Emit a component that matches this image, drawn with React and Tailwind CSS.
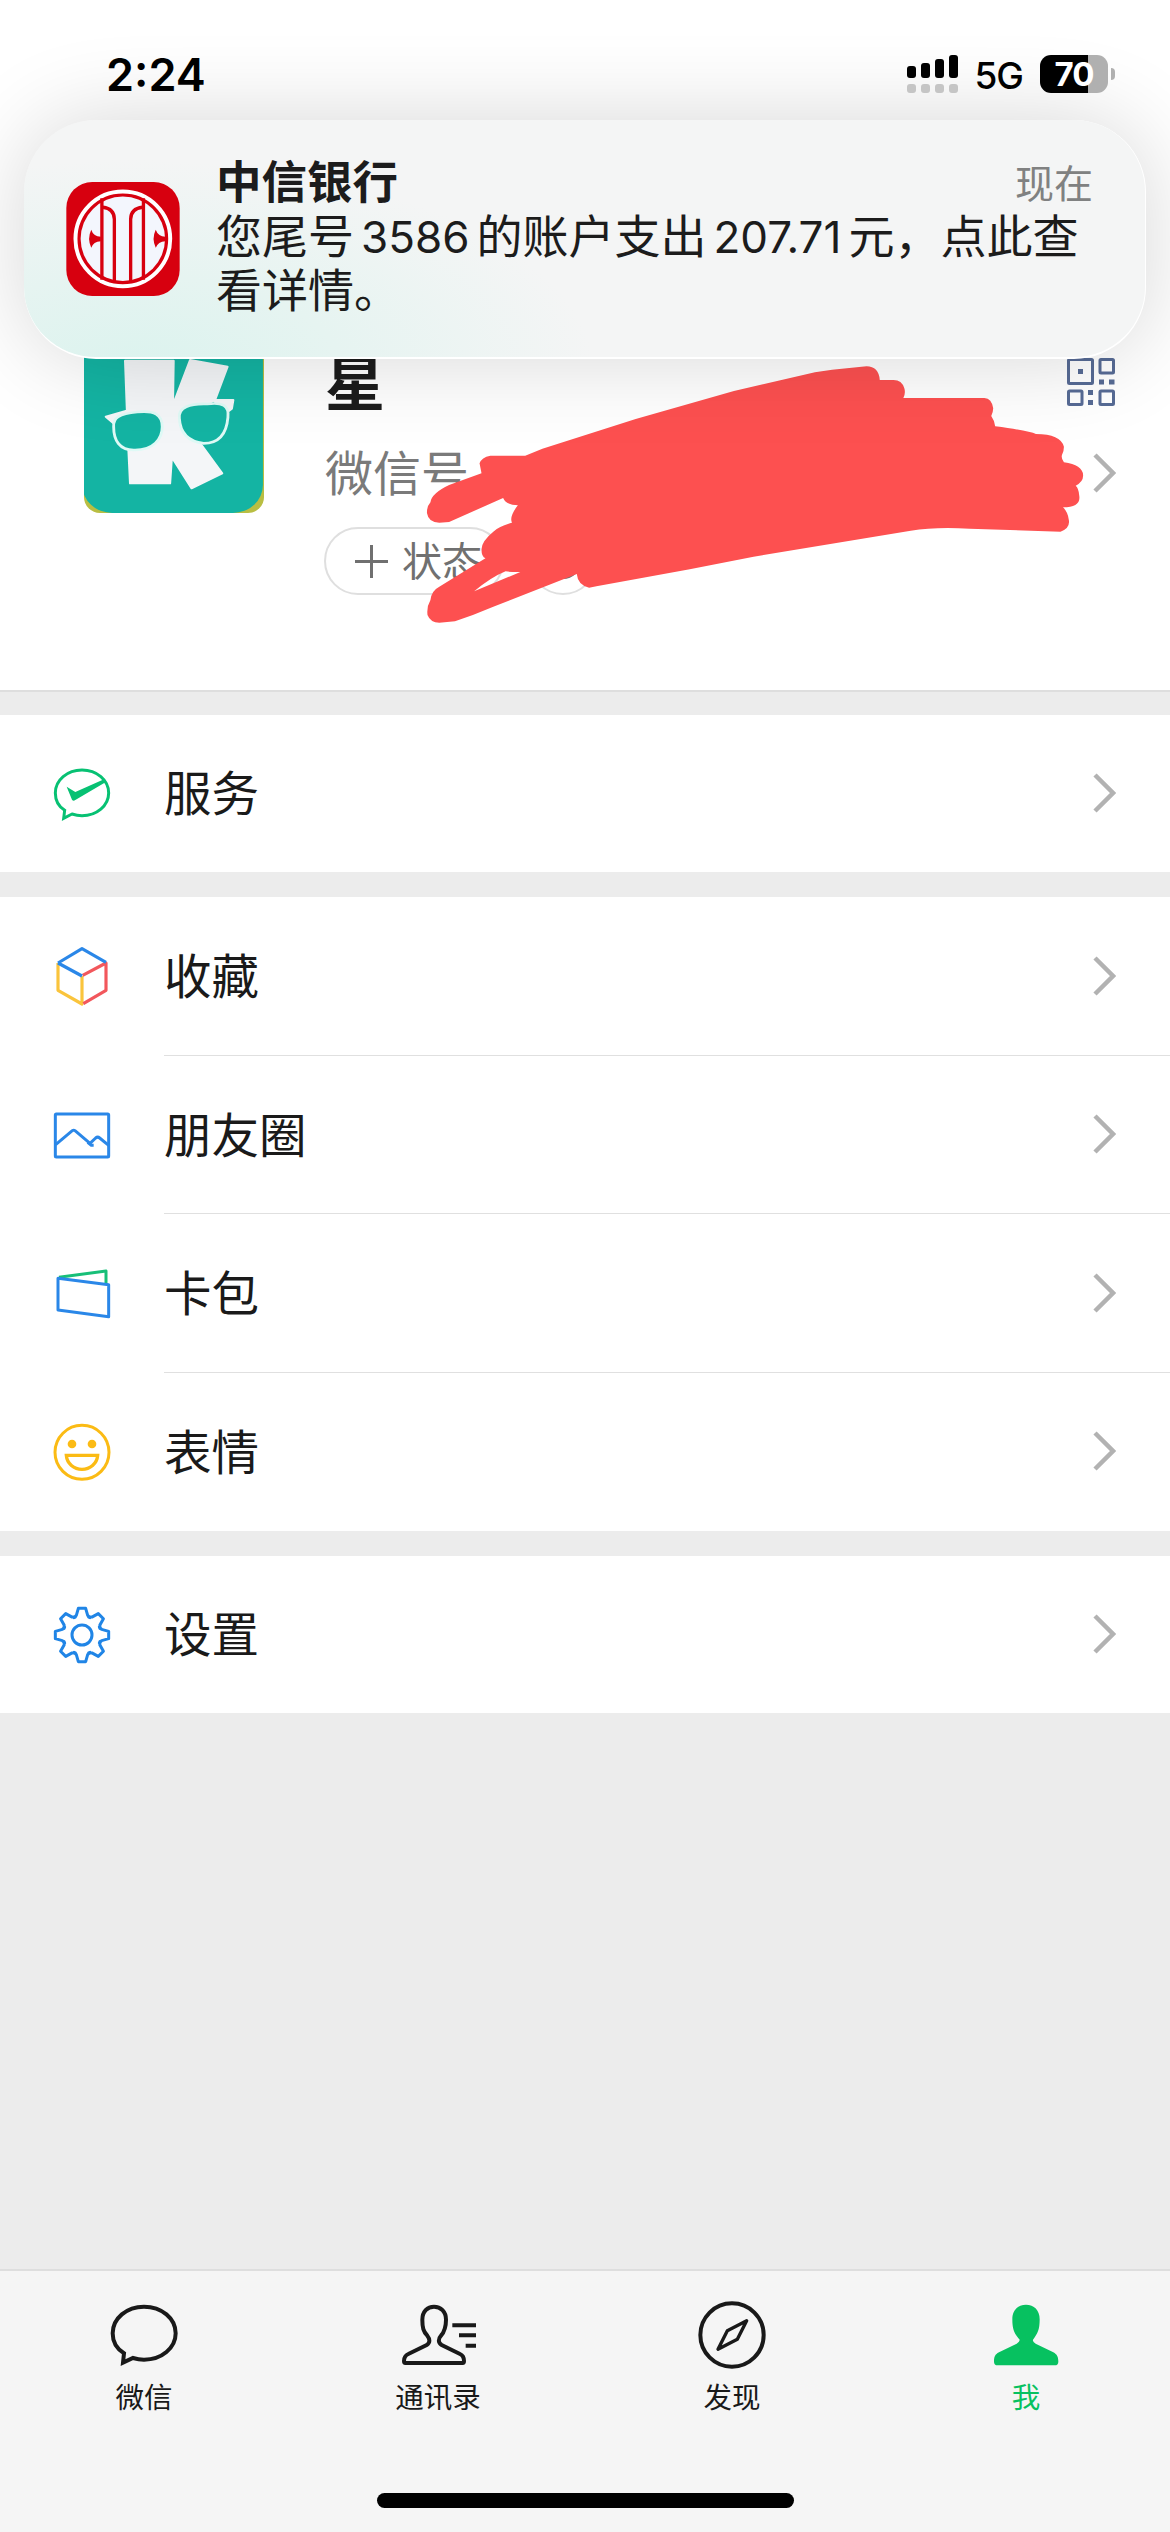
import { useState } from 'react';

// Outline of the settings gear: eight teeth around the origin
const GEAR_PATH = Array.from({ length: 8 }, (_, i) => {
  const a = (i * Math.PI) / 4;
  const pts = [[-24, -52], [-17, -59], [-11, -80], [11, -80], [17, -59], [24, -52]];
  return pts
    .map(([x, y]) => `${(x * Math.cos(a) - y * Math.sin(a)).toFixed(1)} ${(x * Math.sin(a) + y * Math.cos(a)).toFixed(1)}`)
    .join('L');
}).join('L');

function ServiceIcon() {
  return (
    <svg className="w-14 h-14 overflow-visible" viewBox="163 286 168 168" fill="none">
      <path d="M192 443L195 419C176 407 167 388 167 367C167 328 203 298 247 298C291 298 327 328 327 367C327 405 291 435 247 435C236 435 226 433 217 430Z" stroke="#07c173" strokeWidth="9" />
      <path d="M201 348L227 364L313 326L320 333L227 388Q221 393 217 387Z" fill="#07c173" />
    </svg>
  );
}

function FavoriteIcon() {
  return (
    <svg className="w-14 h-14 overflow-visible" viewBox="163 833 168 168" fill="none" strokeWidth="9.500" strokeLinejoin="round">
      <path d="M175 878V960L247 1001V917" stroke="#fac43c" />
      <path d="M251 1000L319 960V878L249 915" stroke="#f2575c" />
      <path d="M175 878L247 835L319 876M175 878L247 917" stroke="#2a87e8" />
    </svg>
  );
}

function MomentsIcon() {
  return (
    <svg className="w-14 h-14 overflow-visible" viewBox="163 138 168 168" fill="none" stroke="#2a87e8" strokeWidth="9" strokeLinejoin="round">
      <rect x="167" y="159" width="160" height="129" rx="3" />
      <path d="M168 251L218 209Q222 206 226 209L271 247L288 231Q294 226 300 231L327 253" />
      <path d="M264 244L275 253H282" />
    </svg>
  );
}

function CardsIcon() {
  return (
    <svg className="w-14 h-14 overflow-visible" viewBox="163 615 168 168" fill="none" strokeWidth="9" strokeLinejoin="round">
      <path d="M178 652L319 633V672" stroke="#17bf78" />
      <path d="M175 655L327 674V770L175 750Z" stroke="#2a87e8" />
    </svg>
  );
}

function StickerIcon() {
  return (
    <svg className="w-14 h-14 overflow-visible" viewBox="163 1092 168 168" fill="none" stroke="#fbbb14" strokeWidth="9">
      <circle cx="247" cy="1177" r="81" />
      <circle cx="217" cy="1152" r="13" fill="#fbbb14" stroke="none" />
      <circle cx="277" cy="1152" r="13" fill="#fbbb14" stroke="none" />
      <path d="M200 1186H294C292 1211 271 1228 247 1228C223 1228 202 1211 200 1186Z" strokeWidth="10" />
    </svg>
  );
}

function SettingsIcon() {
  return (
    <svg className="w-14 h-14 overflow-visible" viewBox="-84 -84 168 168" fill="none" stroke="#2085e6" strokeWidth="9" strokeLinejoin="round">
      <path d={`M${GEAR_PATH}Z`} />
      <circle r="30" />
    </svg>
  );
}

function ChatTabIcon() {
  return (
    <svg className="w-18 h-18 overflow-visible" viewBox="145 146 216 216" fill="none" stroke="#191919" strokeWidth="12">
      <path d="M190 337L193 309C170 295 159 273 159 249C159 204 201 169 253 169C306 169 348 204 348 249C348 293 306 328 253 328C241 328 230 326 220 323Z" />
    </svg>
  );
}

function ContactsTabIcon() {
  return (
    <svg className="w-18 h-18 overflow-visible" viewBox="1023 146 216 216" fill="none" stroke="#191919" strokeWidth="12">
      <path d="M1033 338Q1029 338 1029 332C1029 322 1033 315 1042 311L1097 284C1108 277 1107 266 1099 256C1087 243 1084 232 1084 208C1084 184 1099 169 1119 169C1139 169 1155 184 1155 208C1155 232 1151 243 1140 256C1131 266 1131 277 1142 284L1197 311C1206 315 1209 322 1209 332Q1209 338 1205 338Z" />
      <path d="M1174 225H1245M1194 255H1245M1214 286H1245" />
    </svg>
  );
}

function DiscoverTabIcon() {
  return (
    <svg className="w-18 h-18 overflow-visible" viewBox="107 146 216 216" fill="none" stroke="#191919" strokeWidth="12" strokeLinejoin="round">
      <circle cx="215" cy="254" r="95" />
      <path d="M259 211L201 241L173 297L231 267Z" strokeWidth="10" />
    </svg>
  );
}

function MeTabIcon() {
  return (
    <svg className="w-18 h-18 overflow-visible" viewBox="989 146 216 216" fill="#07c160">
      <path d="M1012 345Q1001 345 1001 334C1001 320 1004 312 1016 306L1069 280Q1079 274 1078 268C1062 250 1056 238 1056 207C1056 179 1073 163 1097 163C1121 163 1138 179 1138 207C1138 238 1132 250 1118 268Q1116 274 1126 280L1179 306C1190 312 1194 320 1194 334Q1194 345 1183 345Z" />
    </svg>
  );
}

function Chevron() {
  return (
    <svg className="w-6 h-10" viewBox="0 0 24 40" fill="none">
      <path d="M3 2L21 20L3 38" stroke="#b2b2b2" strokeWidth="4.500" />
    </svg>
  );
}

function QrIcon() {
  return (
    <svg className="w-12 h-12" viewBox="0 0 48 48" fill="none" stroke="#576b95" strokeWidth="3">
      <rect x="1.5" y="1.5" width="24" height="24" rx="1" />
      <rect x="33" y="1.5" width="13.5" height="13.5" rx="1" />
      <rect x="1.5" y="33" width="13.5" height="13.5" rx="1" />
      <rect x="33" y="33" width="13.5" height="13.5" rx="1" />
      <path d="M11 13.5H16M32 24H37M42 24H47.500M21 34.500H26M21 44.500H26" strokeWidth="5" />
    </svg>
  );
}

function BankLogo() {
  return (
    <svg className="w-[114px] h-[114px] shrink-0" viewBox="50 36 341 343">
      <rect x="50" y="36" width="341" height="343" rx="78" fill="#d7000f" />
      <circle cx="220" cy="207" r="142.500" fill="none" stroke="#fff" strokeWidth="12" />
      <circle cx="220" cy="207" r="127" fill="#f3f6fd" />
      <g fill="none" stroke="#d7000f" strokeWidth="10">
        <path d="M157 85V330M282 85V330" />
        <path d="M160 112Q194 116 194.500 148V334" />
        <path d="M279 112Q244 116 243.500 148V334" />
      </g>
      <path d="M125 180Q131 200 154 201V214Q131 215 125 234Q112 207 125 180Z" fill="#d7000f" />
      <path d="M319 180Q326 200 348 201V214Q326 215 319 234Q306 207 319 180Z" fill="#d7000f" />
    </svg>
  );
}

function Avatar() {
  return (
    <svg className="w-[180px] h-[180px] rounded-2xl shrink-0" viewBox="123 9 504 540" preserveAspectRatio="none">
      <rect x="123" y="9" width="504" height="540" fill="#b9be42" />
      <rect x="118" y="5" width="506" height="544" rx="84" fill="#14b4a3" />
      <g fill="#f4f6f8" stroke="#f4f6f8" strokeWidth="6" strokeLinejoin="round">
        <path d="M238 92H374L372 225L420 90L525 110L490 210L440 240L385 285L450 342L510 430L424 475L369 382L364 460H252L247 350Z" />
        <path d="M184 260L240 243L235 262L208 282Z" />
        <path d="M485 210H541L537 236L520 250Z" />
      </g>
      <g fill="#14b4a3" stroke="#dffaf6" strokeWidth="8">
        <path d="M206 290C204 262 222 252 272 246C320 240 342 254 342 290C342 328 316 360 266 360C222 362 206 330 206 290Z" />
        <path d="M390 265C386 232 420 220 468 222C510 216 530 226 526 262C522 312 502 340 458 340C412 334 392 304 390 265Z" />
      </g>
    </svg>
  );
}

// Freehand marker drawn over the account details
function Scribble() {
  return (
    <svg className="absolute left-[400px] top-[340px] w-[770px] h-[300px]" viewBox="0 0 1568 900" preserveAspectRatio="none">
      <path
        fill="#fd5050"
        fillRule="evenodd"
        d="M255 347H184Q166 352 162 370L166 400L100 435Q64 460 62 487Q54 500 55 520Q58 548 80 548L100 546L210 474Q216 495 240 496Q222 530 228 548Q200 560 190 575Q165 605 166 630Q166 650 174 655L80 740Q64 752 62 780Q54 800 56 825Q62 848 80 848L112 844Q150 825 190 800L360 702Q362 735 385 743L400 739L590 688L720 650L1040 572Q1090 560 1160 566L1345 575Q1365 565 1362 540Q1360 515 1350 502Q1388 502 1383 465Q1382 445 1376 437Q1392 425 1391 405Q1390 375 1352 367Q1346 355 1348 345Q1352 335 1352 320Q1345 282 1295 282Q1280 272 1212 259Q1210 240 1204 228Q1208 215 1208 205Q1205 175 1190 174H1025Q1030 160 1027 145Q1022 120 1005 120H977Q975 80 950 79L880 89L845 97L680 153L480 237L290 326ZM151 754Q185 712 215 694Q230 697 245 696Z"
      />
    </svg>
  );
}

const GROUPS = [
  [{ label: '服务', Icon: ServiceIcon }],
  [
    { label: '收藏', Icon: FavoriteIcon },
    { label: '朋友圈', Icon: MomentsIcon },
    { label: '卡包', Icon: CardsIcon },
    { label: '表情', Icon: StickerIcon },
  ],
  [{ label: '设置', Icon: SettingsIcon }],
];

const TABS = [
  { label: '微信', Icon: ChatTabIcon },
  { label: '通讯录', Icon: ContactsTabIcon },
  { label: '发现', Icon: DiscoverTabIcon },
  { label: '我', Icon: MeTabIcon },
];

const SIGNAL_BARS = ['h-[12px]', 'h-[15px]', 'h-[19px]', 'h-[23px]'];

function StatusBar() {
  return (
    <div className="absolute inset-x-0 top-0 z-20 h-[120px] flex items-start justify-between pl-[106px] pr-[55px] pt-[55px] font-['Inter'] text-black">
      <span className="text-[45px] leading-[40px] font-semibold">2:24</span>
      <div className="flex items-start">
        <div className="flex items-end gap-[5px] mr-4">
          {SIGNAL_BARS.map((height) => (
            <div key={height} className="flex flex-col gap-1.5">
              <span className={`w-[9px] rounded-[3px] bg-black ${height}`} />
              <span className="w-[9px] h-[9px] rounded-[3px] bg-[#c5c5c5]" />
            </div>
          ))}
        </div>
        <span className="text-[37px] leading-[42px] font-medium tracking-[-1px] mr-[17px]">5G</span>
        <div className="flex items-center">
          <div className="w-[68px] h-[38px] rounded-[11px] bg-linear-to-r from-black from-[71%] to-[#b0b0b0] to-[71%] flex items-center justify-center text-white text-[33px] leading-none font-bold tracking-[-1px]">
            70
          </div>
          <div className="ml-[3px] w-1 h-3 rounded-r-full bg-[#b0b0b0]" />
        </div>
      </div>
    </div>
  );
}

function Notification() {
  return (
    <div className="absolute z-10 left-6 top-[120px] w-[1122px] h-[239px] rounded-[72px] border-b-2 border-r border-white bg-[#f5f5f5] bg-[radial-gradient(ellipse_460px_210px_at_110px_250px,#dbf3ee_0%,#e6f4f1_45%,#f4f5f5_100%)] shadow-[0_0_90px_rgba(0,0,0,0.16)] flex items-start pl-[42px]">
      <div className="mt-[62px]">
        <BankLogo />
      </div>
      <div className="ml-[36px] mt-[34px] w-[880px] text-[#1c1c1c]">
        <div className="flex justify-between items-center h-[54px] leading-[54px]">
          <span className="text-[45.5px] font-bold -mt-1">中信银行</span>
          <span className="text-[39px] text-[#808181] mr-[3px]">现在</span>
        </div>
        <p className="-mt-0.5 text-[46px] leading-[54px] whitespace-nowrap">
          您尾号<span className="font-['Inter'] text-[44px] leading-none mx-[7px]">3586</span>
          的账户支出<span className="font-['Inter'] text-[44px] leading-none mx-[7px]">207.71</span>元，点此查
          <br />
          看详情。
        </p>
      </div>
    </div>
  );
}

function Profile() {
  return (
    <section className="relative h-[692px] bg-white border-b-2 border-[#dedede] pt-[333px] pl-[84px] pr-[55px] flex items-start">
      <Avatar />
      <div className="ml-[61px] flex-1">
        <div className="h-[90px] flex items-center text-[60px] font-bold text-[#1c1c1c]">
          <span className="mt-1">星</span>
        </div>
        <div className="mt-[19px] h-[56px] flex items-center text-[48px] text-[#7a7a7a]">微信号</div>
        <div className="mt-[29px] -ml-px flex gap-[25px]">
          <div className="w-[180px] h-[68px] rounded-full border-2 border-[#dfdfdf] flex items-center pl-[29px] text-[40px] text-[#707070]">
            <svg className="w-[33px] h-[33px] mr-3.5" viewBox="0 0 33 33">
              <path d="M16.5 0V33M0 16.500H33" stroke="#707070" strokeWidth="3" />
            </svg>
            <span className="-mt-1">状态</span>
          </div>
          <div className="w-[68px] h-[68px] rounded-full border-2 border-[#dfdfdf] flex items-center justify-center">
            <div className="w-9 h-9 rounded-full bg-[#707070]" />
          </div>
        </div>
      </div>
      <div className="w-12 pt-[25px] flex flex-col items-end">
        <QrIcon />
        <div className="mt-[47px] -mr-px">
          <Chevron />
        </div>
      </div>
    </section>
  );
}

function MenuRow({ label, Icon, last }) {
  return (
    <div className="h-full flex items-center pl-[54px]">
      <Icon />
      <div className={`ml-[54px] h-full flex-1 flex items-center justify-between pr-[54px] border-b ${last ? 'border-transparent' : 'border-[#e0e0e0]'}`}>
        <span className="text-[47.5px] text-[#1a1a1a] -mt-1">{label}</span>
        <Chevron />
      </div>
    </div>
  );
}

export default function App() {
  const [activeTab, setActiveTab] = useState('我');

  return (
    <div className="relative w-[1170px] h-[2532px] overflow-hidden bg-[#ececec] flex flex-col font-['Noto_Sans_CJK_SC',sans-serif]">
      <StatusBar />
      <Notification />
      <Profile />
      <main className="flex-1 pt-[23px] flex flex-col gap-[25px]">
        {GROUPS.map((group) => (
          <section key={group[0].label} className="bg-white">
            {group.map((item, i) => (
              <div key={item.label} className={group.length > 1 ? 'h-[158.5px]' : 'h-[157px]'}>
                <MenuRow {...item} last={i === group.length - 1} />
              </div>
            ))}
          </section>
        ))}
      </main>
      <nav className="h-[263px] bg-[#f5f5f5] border-t-2 border-[#dedede] flex flex-col">
        <div className="grid grid-cols-4 -mx-[3px] pt-[28px]">
          {TABS.map(({ label, Icon }) => (
            <button key={label} onClick={() => setActiveTab(label)} className="flex flex-col items-center">
              <Icon />
              <span className={`mt-1.5 text-[28.5px] leading-[38px] ${activeTab === label ? 'text-[#07c160]' : 'text-[#191919]'}`}>
                {label}
              </span>
            </button>
          ))}
        </div>
        <div className="mt-auto mb-6 mx-auto w-[417px] h-[15px] rounded-full bg-black" />
      </nav>
      <Scribble />
    </div>
  );
}
